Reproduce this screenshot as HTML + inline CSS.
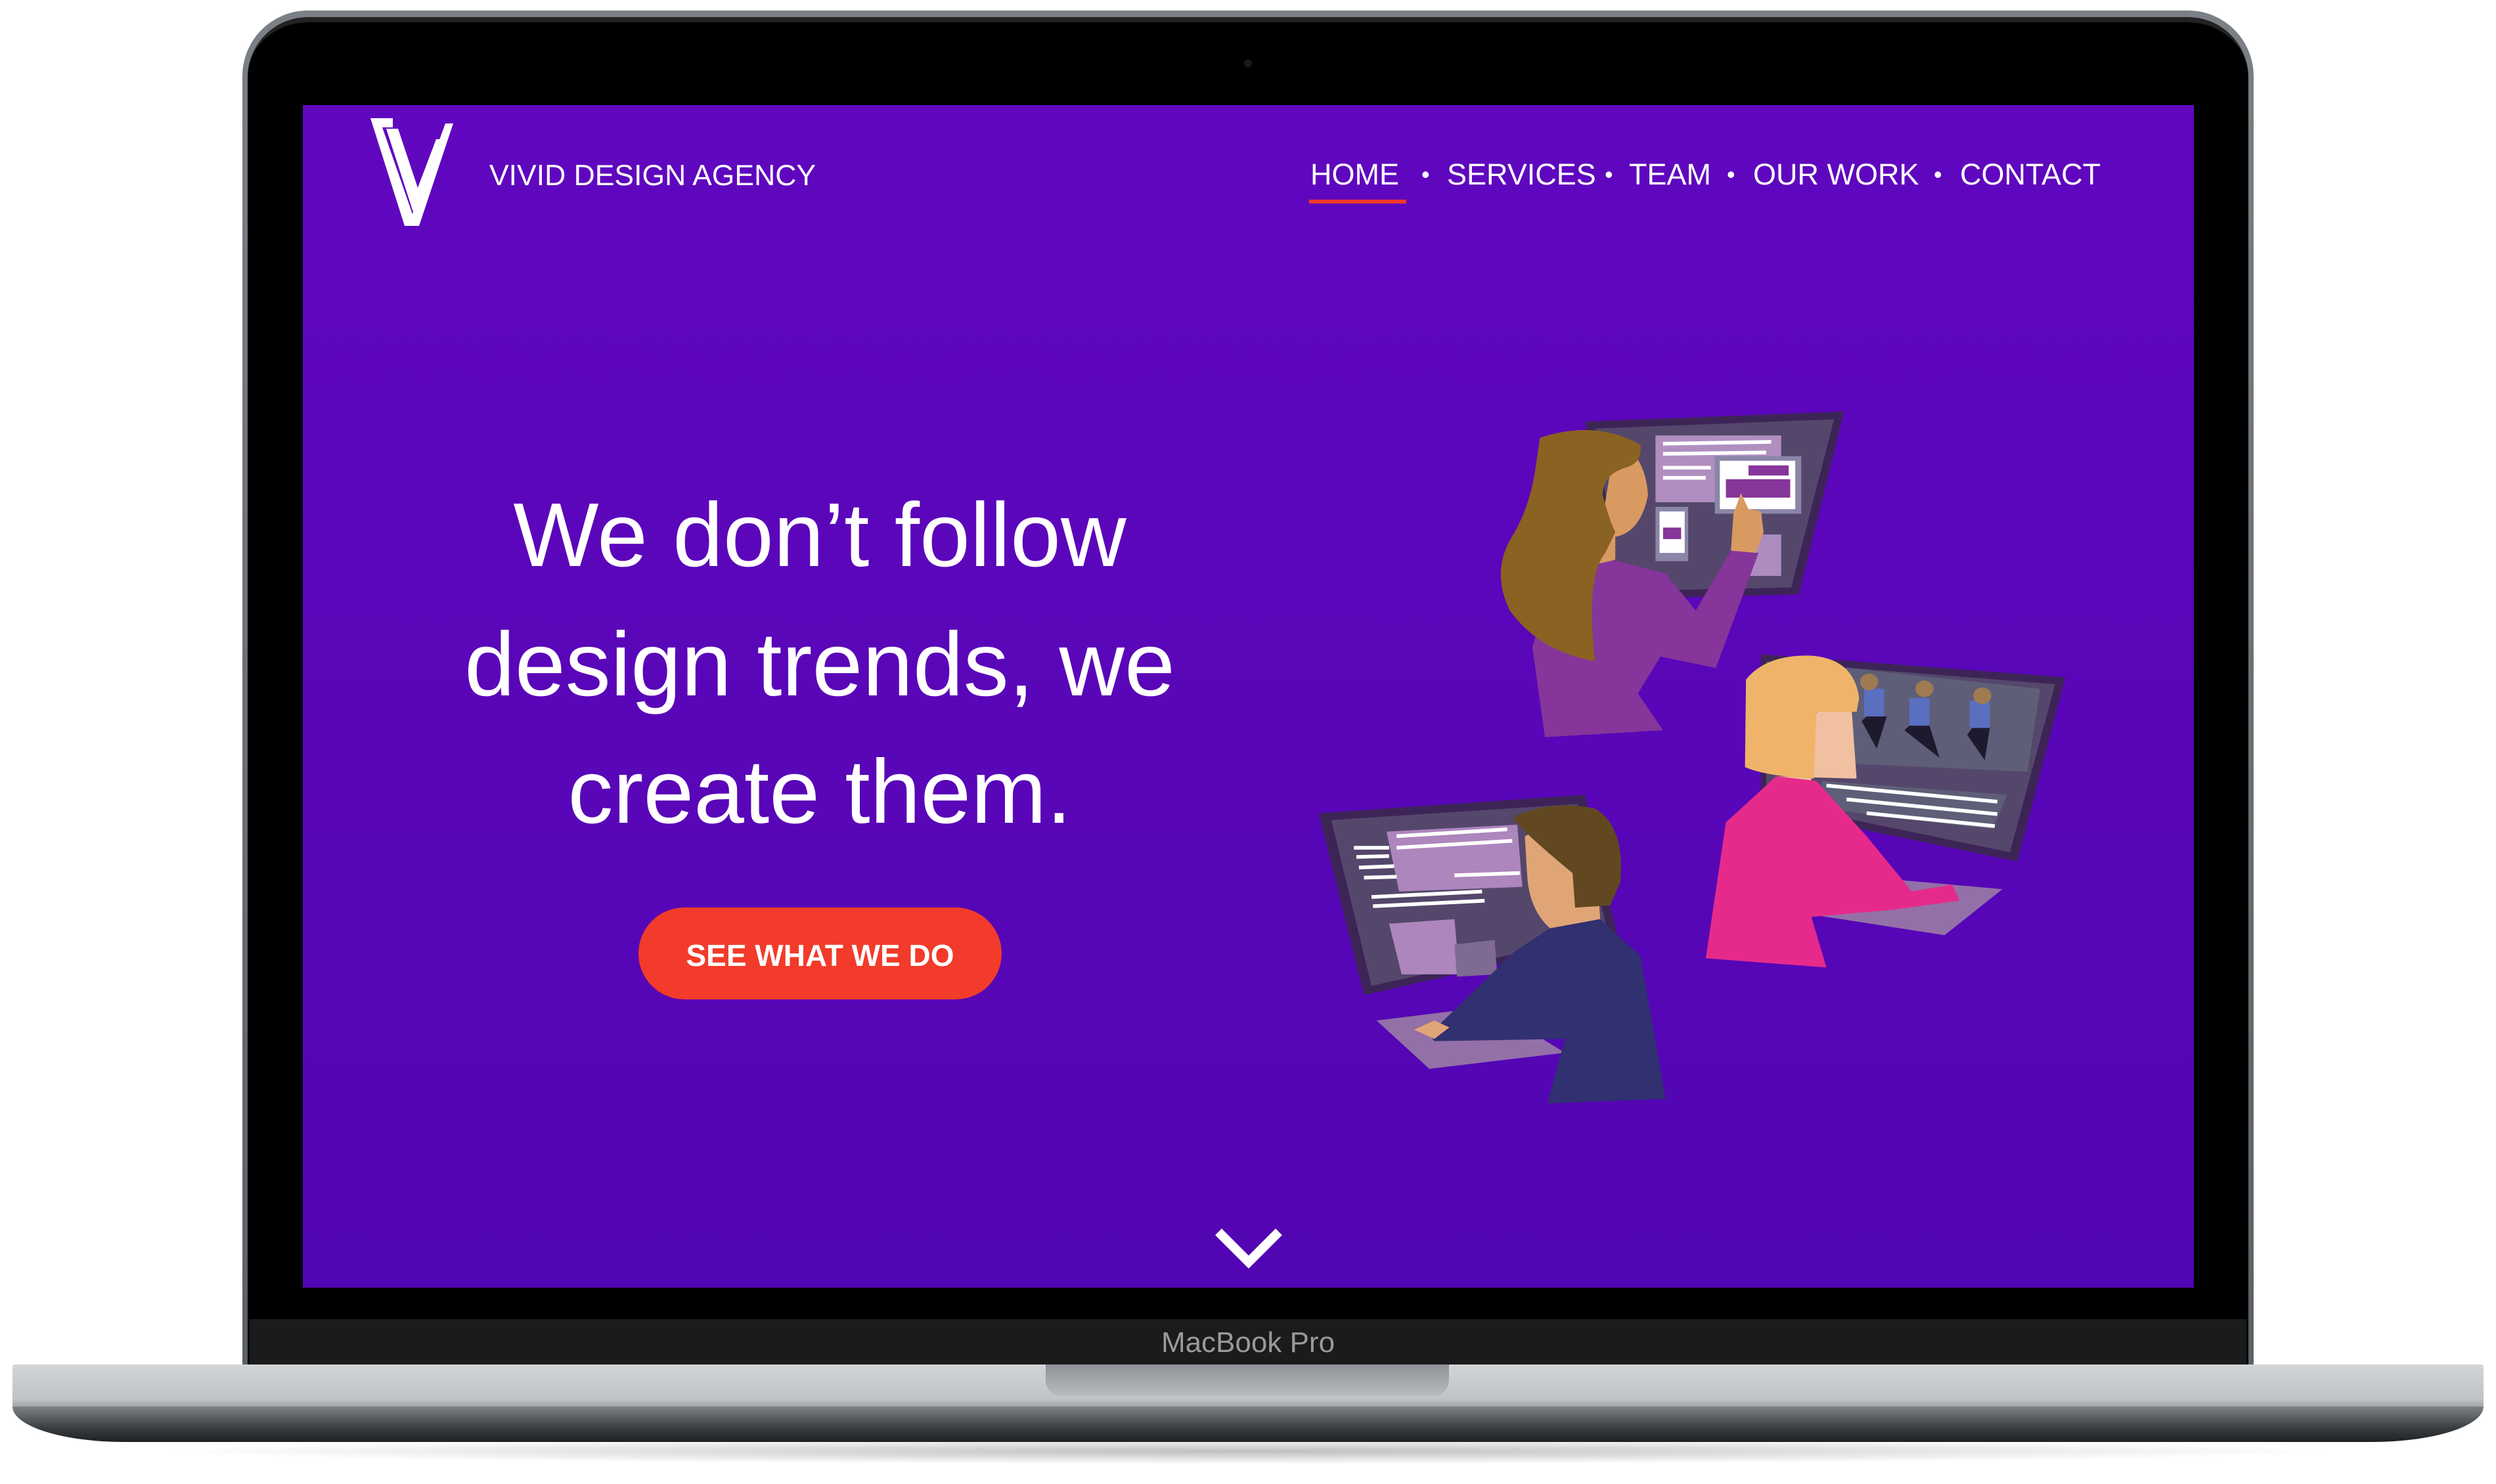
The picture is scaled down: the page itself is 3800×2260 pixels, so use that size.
<!DOCTYPE html>
<html><head><meta charset="utf-8"><style>
*{margin:0;padding:0;box-sizing:border-box}
body{width:3800px;height:2260px;background:#fff;position:relative;overflow:hidden;font-family:"Liberation Sans",sans-serif}
.abs{position:absolute}
#lid{left:369px;top:16px;width:3062px;height:2070px;border-radius:100px 100px 0 0;background:linear-gradient(#7a8085,#5c6166)}
#lidin{left:377px;top:26px;width:3046px;height:2060px;border-radius:92px 92px 0 0;background:#000;border-top:8px solid #222}
#chin{left:380px;top:2009px;width:3040px;height:70px;background:#1b1b1b}
#screen{left:461px;top:160px;width:2879px;height:1801px;background:linear-gradient(#6007bf,#5205b2)}
#base{left:19px;top:2078px;width:3762px;height:66px;background:linear-gradient(#d2d5d8,#bfc3c6 80%,#9ea2a6);border-radius:4px 4px 0 0}
#under{left:19px;top:2142px;width:3762px;height:54px;background:linear-gradient(#7d8286,#3a3e42 60%,#1e2124);border-radius:0 0 170px 170px/0 0 54px 54px}
#shadow{left:230px;top:2190px;width:3340px;height:40px;border-radius:50%;background:radial-gradient(ellipse at center,rgba(0,0,0,.25),rgba(0,0,0,0) 70%)}
#notch{left:1592px;top:2078px;width:614px;height:48px;background:linear-gradient(#8e9296,#b9bcbf);border-radius:0 0 24px 24px}
.nav{top:238px;color:#fff;font-size:45px;line-height:56px;white-space:nowrap}
.dot{top:238px;color:#fff;font-size:36px;line-height:56px}
.hero{left:548px;width:1400px;text-align:center;color:#fff;font-size:138px;font-weight:300;white-space:nowrap;line-height:160px}
</style></head><body>
<div id="shadow" class="abs"></div>
<div id="lid" class="abs"></div>
<div id="lidin" class="abs"></div>
<div id="chin" class="abs"></div>
<div class="abs" style="left:1894px;top:91px;width:12px;height:12px;border-radius:50%;background:#1a1a1a"></div>
<div id="screen" class="abs"></div>
<div class="abs" style="left:1700px;top:2020px;width:400px;text-align:center;color:#9a9a9a;font-size:44px;line-height:50px">MacBook Pro</div>
<div id="base" class="abs"></div>
<div id="under" class="abs"></div>
<div id="notch" class="abs"></div>

<svg class="abs" style="left:560px;top:176px" width="150" height="172" viewBox="0 0 150 172">
<polygon fill="#fff" points="4,4 38,4 38,18 22,18 68,150 118,12 130,12 78,168 56,168"/>
<polygon fill="#fff" points="28,20 46,20 76,110 104,36 112,36 76,150 70,150"/>
</svg>
<div class="abs" style="left:745px;top:240px;color:#fff;font-size:44.5px;line-height:56px;white-space:nowrap">VIVID DESIGN AGENCY</div>

<div class="abs nav" style="left:1995px">HOME</div>
<div class="abs" style="left:1993px;top:304px;width:148px;height:6px;background:#f0372c"></div>
<div class="abs dot" style="left:2164px">•</div>
<div class="abs nav" style="left:2203px">SERVICES</div>
<div class="abs dot" style="left:2443px">•</div>
<div class="abs nav" style="left:2480px">TEAM</div>
<div class="abs dot" style="left:2629px">•</div>
<div class="abs nav" style="left:2669px">OUR WORK</div>
<div class="abs dot" style="left:2944px">•</div>
<div class="abs nav" style="left:2984px">CONTACT</div>

<div class="abs hero" style="top:735px">We don’t follow</div>
<div class="abs hero" style="top:932px">design trends, we</div>
<div class="abs hero" style="top:1126px">create them.</div>

<div class="abs" style="left:972px;top:1382px;width:553px;height:140px;border-radius:70px;background:#f23b2a;color:#fff;font-size:46px;line-height:146px;text-align:center;font-weight:bold">SEE WHAT WE DO</div>

<svg class="abs" style="left:1847px;top:1868px" width="108" height="66" viewBox="0 0 108 66"><polyline points="8,8 54,54 100,8" fill="none" stroke="#fff" stroke-width="14"/></svg>

<svg class="abs" style="left:2000px;top:600px" width="1200" height="1100" viewBox="0 0 1568 1568" preserveAspectRatio="none">
<polygon points="540,60 1055,38 965,435 600,445" fill="#3d2457"/>
<polygon points="560,75 1035,55 950,420 610,428" fill="#54476b"/>
<rect x="680" y="90" width="250" height="145" fill="#b08fc0"/>
<g stroke="#fff" stroke-width="8"><line x1="695" y1="108" x2="910" y2="104"/><line x1="695" y1="130" x2="900" y2="127"/><line x1="695" y1="160" x2="790" y2="160"/><line x1="695" y1="182" x2="780" y2="182"/></g>
<rect x="798" y="135" width="172" height="125" fill="#8a86a8"/>
<rect x="808" y="145" width="150" height="105" fill="#fff"/>
<rect x="820" y="185" width="128" height="40" fill="#86359a"/><rect x="865" y="155" width="80" height="22" fill="#86359a"/>
<rect x="680" y="245" width="65" height="118" fill="#8a86a8"/><rect x="688" y="255" width="50" height="90" fill="#fff"/>
<rect x="695" y="290" width="36" height="25" fill="#86359a"/>
<rect x="835" y="305" width="95" height="90" fill="#ad8cc0"/>
<path d="M435,550 L470,420 L560,350 L700,390 L760,470 L830,340 L885,345 L800,595 L690,570 L645,650 L695,730 L460,745 Z" fill="#86359a"/>
<path d="M600,100 Q660,130 665,220 Q650,300 600,310 L600,360 L560,370 Z" fill="#d99a62"/>
<path d="M835,260 L850,215 L865,250 L890,255 L895,300 L880,345 L830,340 Z" fill="#d99a62"/>
<path d="M450,95 Q560,55 650,110 Q655,150 620,160 Q575,175 575,220 Q590,280 600,300 L580,345 Q540,400 560,580 Q450,560 390,470 Q350,380 400,300 Q430,240 440,170 Z" fill="#8a6222"/>
<polygon points="890,565 1495,615 1400,1015 890,900" fill="#3d2457"/>
<polygon points="900,580 1475,630 1385,995 900,885" fill="#55476b"/>
<polygon points="1020,590 1445,640 1420,820 1020,800" fill="#5e5e78"/>
<g fill="#5a6fc0"><rect x="1095" y="640" width="40" height="60"/><rect x="1185" y="660" width="40" height="60"/><rect x="1305" y="665" width="40" height="60"/></g>
<g fill="#1e1a2e"><polygon points="1100,700 1140,700 1120,770 1090,710"/><polygon points="1185,720 1225,720 1245,790 1175,730"/><polygon points="1310,725 1345,725 1335,795 1300,740"/></g>
<g fill="#a07a50"><circle cx="1105" cy="625" r="18"/><circle cx="1215" cy="640" r="18"/><circle cx="1330" cy="655" r="18"/></g>
<polygon points="1010,840 1380,870 1350,945 1010,900" fill="#5e5e78"/>
<g stroke="#fff" stroke-width="8"><line x1="1020" y1="850" x2="1360" y2="885"/><line x1="1060" y1="880" x2="1360" y2="912"/><line x1="1100" y1="910" x2="1355" y2="938"/></g>
<polygon points="1010,1040 1370,1075 1255,1175 990,1130" fill="#9470a8"/>
<path d="M920,830 L1080,835 L1070,680 Q1020,640 985,720 L990,840 Z" fill="#f0c0a0"/>
<path d="M780,1225 L820,930 L920,830 L1000,840 L1100,960 L1190,1080 L1270,1065 L1285,1100 L1150,1120 L990,1135 L1020,1245 Z" fill="#e62a8c"/>
<path d="M860,620 Q900,565 990,568 Q1075,575 1085,660 L1080,690 L1000,690 L995,835 Q900,830 858,810 Z" fill="#efb469"/>
<polygon points="10,910 540,870 605,1180 100,1305" fill="#3d2457"/>
<polygon points="35,925 525,890 585,1170 115,1285" fill="#54476b"/>
<polygon points="145,950 405,935 415,1070 170,1080" fill="#ad86bd"/>
<g stroke="#fff" stroke-width="8"><line x1="165" y1="960" x2="385" y2="945"/><line x1="165" y1="985" x2="395" y2="970"/><line x1="80" y1="985" x2="150" y2="985"/><line x1="85" y1="1005" x2="150" y2="1003"/><line x1="90" y1="1028" x2="160" y2="1025"/><line x1="100" y1="1050" x2="165" y2="1048"/><line x1="115" y1="1092" x2="335" y2="1080"/><line x1="118" y1="1112" x2="340" y2="1100"/><line x1="280" y1="1045" x2="410" y2="1040"/></g>
<polygon points="150,1150 280,1140 290,1260 175,1260" fill="#ad86bd"/>
<polygon points="280,1195 360,1185 365,1260 285,1265" fill="#7e6a92"/>
<polygon points="125,1360 350,1330 500,1430 230,1465" fill="#9470a8"/>
<path d="M420,960 Q470,930 560,980 L570,1140 L470,1160 Q430,1120 425,1050 Z" fill="#e0a577"/>
<path d="M395,920 Q470,880 560,900 Q620,940 610,1060 L590,1110 L520,1115 L515,1040 Q470,1000 430,960 Z" fill="#614820"/>
<path d="M230,1390 L400,1210 L470,1160 L570,1140 L650,1220 L700,1530 L465,1540 L500,1400 L240,1405 Z" fill="#313070"/>
<path d="M200,1380 L240,1360 L270,1375 L240,1400 Z" fill="#e0a577"/>
</svg>
</body></html>
